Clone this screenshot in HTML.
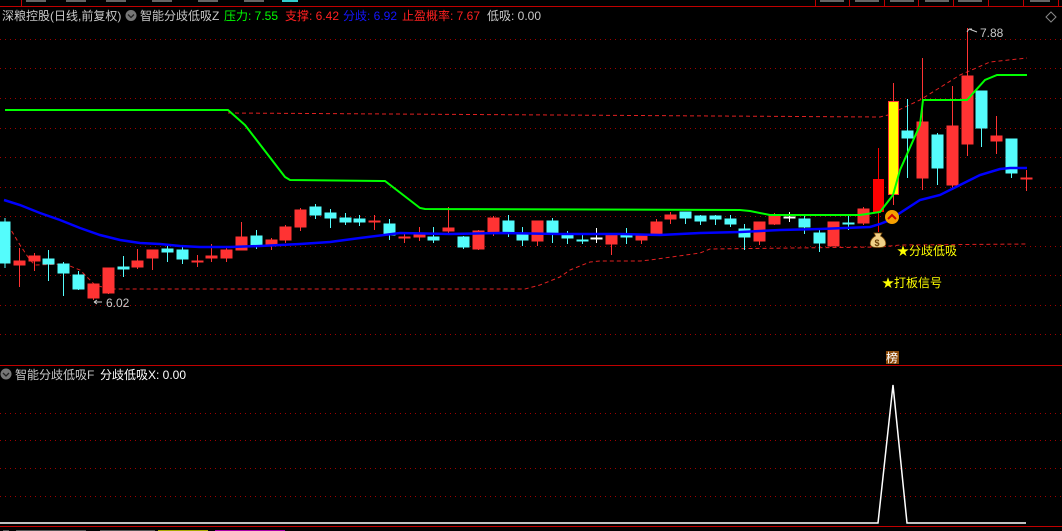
<!DOCTYPE html>
<html><head><meta charset="utf-8"><style>
html,body{margin:0;padding:0;background:#000;width:1062px;height:531px;overflow:hidden}
svg{display:block}
text{font-family:"Liberation Sans","Noto Sans CJK SC",sans-serif;font-size:12px}
</style></head><body>
<svg width="1062" height="531" viewBox="0 0 1062 531" xmlns="http://www.w3.org/2000/svg">
<rect width="1062" height="531" fill="#000"/>
<line x1="0" y1="6.5" x2="1062" y2="6.5" stroke="#c00000" stroke-width="1"/>
<g stroke="#c00000"><line x1="21.5" y1="0" x2="21.5" y2="6"/><line x1="815.5" y1="0" x2="815.5" y2="6"/><line x1="849.5" y1="0" x2="849.5" y2="6"/><line x1="884.5" y1="0" x2="884.5" y2="6"/><line x1="918.5" y1="0" x2="918.5" y2="6"/><line x1="953.5" y1="0" x2="953.5" y2="6"/><line x1="988.5" y1="0" x2="988.5" y2="6"/><line x1="1023.5" y1="0" x2="1023.5" y2="6"/><line x1="1058.5" y1="0" x2="1058.5" y2="6"/></g>
<g fill="#666"><rect x="26" y="0" width="20" height="2"/><rect x="66" y="0" width="20" height="2"/><rect x="106" y="0" width="20" height="2"/><rect x="152" y="0" width="20" height="2"/><rect x="198" y="0" width="20" height="2"/><rect x="244" y="0" width="20" height="2"/><rect x="282" y="0" width="16" height="2" fill="#3cc"/><rect x="820" y="0" width="24" height="2"/><rect x="855" y="0" width="24" height="2"/><rect x="890" y="0" width="24" height="2"/><rect x="925" y="0" width="24" height="2"/><rect x="958" y="0" width="24" height="2"/><rect x="1030" y="0" width="20" height="2"/></g>
<g stroke="#a00000" stroke-width="1" stroke-dasharray="1 4">
<line x1="0" y1="39.5" x2="1062" y2="39.5"/><line x1="0" y1="68.5" x2="1062" y2="68.5"/><line x1="0" y1="98.5" x2="1062" y2="98.5"/><line x1="0" y1="128.5" x2="1062" y2="128.5"/><line x1="0" y1="157.5" x2="1062" y2="157.5"/><line x1="0" y1="187.5" x2="1062" y2="187.5"/><line x1="0" y1="216.5" x2="1062" y2="216.5"/><line x1="0" y1="246.5" x2="1062" y2="246.5"/><line x1="0" y1="275.5" x2="1062" y2="275.5"/><line x1="0" y1="305.5" x2="1062" y2="305.5"/><line x1="0" y1="334.5" x2="1062" y2="334.5"/>
<line x1="0" y1="413.5" x2="1062" y2="413.5"/><line x1="0" y1="440.5" x2="1062" y2="440.5"/><line x1="0" y1="468.5" x2="1062" y2="468.5"/><line x1="0" y1="496.5" x2="1062" y2="496.5"/>
</g>
<line x1="0" y1="365.5" x2="1062" y2="365.5" stroke="#c00000"/>
<line x1="0" y1="526.5" x2="1062" y2="526.5" stroke="#c00000"/>
<text x="2" y="20" fill="#c8c8c8">深粮控股(日线,前复权)</text>
<circle cx="131" cy="15.5" r="5.5" fill="#777"/><path d="M128 14.5l3 3 3-3" stroke="#222" stroke-width="1.3" fill="none"/>
<text x="140" y="20" fill="#c8c8c8">智能分歧低吸Z</text>
<text x="224" y="20" fill="#00ff00">压力: 7.55</text>
<text x="285" y="20" fill="#ff2020">支撑: 6.42</text>
<text x="343" y="20" fill="#1515ff">分歧: 6.92</text>
<text x="402" y="20" fill="#ff2020">止盈概率: 7.67</text>
<text x="487" y="20" fill="#c8c8c8">低吸: 0.00</text>
<circle cx="6" cy="374" r="5.5" fill="#777"/><path d="M3 373l3 3 3-3" stroke="#222" stroke-width="1.3" fill="none"/>
<text x="15" y="379" fill="#c8c8c8">智能分歧低吸F</text>
<text x="100" y="379" fill="#fff">分歧低吸X: 0.00</text>
<path d="M1051 12l5 5-5 5-5-5z" stroke="#888" fill="none"/>
<g stroke="#e02020" stroke-width="1" stroke-dasharray="4 3" fill="none">
<polyline points="228,113 880,117 888,115 920,100 960,75 990,62 1027,58"/>
<polyline points="8,225 20,245 30,260 35,265 65,264 80,270 95,285 110,289 525,289 540,285 560,277 570,270 590,262 600,261 640,261 650,260 700,253 710,249 880,247 900,245 1027,244"/>
</g>
<g stroke-width="1" shape-rendering="crispEdges">
<g stroke="#54fcfc" fill="#54fcfc">
<line x1="5" y1="218" x2="5" y2="268"/><rect x="0" y="222" width="10" height="41"/>
<line x1="48.5" y1="250" x2="48.5" y2="281"/><rect x="43" y="259" width="11" height="5"/>
<line x1="63.5" y1="262" x2="63.5" y2="296"/><rect x="58" y="264" width="11" height="9"/>
<line x1="78.5" y1="271" x2="78.5" y2="290"/><rect x="73" y="275" width="11" height="14"/>
<line x1="123.5" y1="256" x2="123.5" y2="277"/><rect x="118" y="267" width="11" height="2"/>
<line x1="167.5" y1="245" x2="167.5" y2="262"/><rect x="162" y="249" width="11" height="3"/>
<line x1="182.5" y1="247" x2="182.5" y2="264"/><rect x="177" y="250" width="11" height="9"/>
<line x1="256.5" y1="230" x2="256.5" y2="249"/><rect x="251" y="236" width="11" height="9"/>
<line x1="315.5" y1="204" x2="315.5" y2="219"/><rect x="310" y="207" width="11" height="8"/>
<line x1="330.5" y1="209" x2="330.5" y2="228"/><rect x="325" y="213" width="11" height="5"/>
<line x1="345.5" y1="213" x2="345.5" y2="225"/><rect x="340" y="218" width="11" height="4"/>
<line x1="359.5" y1="215" x2="359.5" y2="226"/><rect x="354" y="219" width="11" height="3"/>
<line x1="389.5" y1="219" x2="389.5" y2="240"/><rect x="384" y="224" width="11" height="11"/>
<line x1="433.5" y1="227" x2="433.5" y2="243"/><rect x="428" y="237" width="11" height="3"/>
<line x1="463.5" y1="236" x2="463.5" y2="249"/><rect x="458" y="237" width="11" height="10"/>
<line x1="508.5" y1="215" x2="508.5" y2="237"/><rect x="503" y="221" width="11" height="12"/>
<line x1="522.5" y1="227" x2="522.5" y2="246"/><rect x="517" y="234" width="11" height="6"/>
<line x1="552.5" y1="218" x2="552.5" y2="243"/><rect x="547" y="221" width="11" height="12"/>
<line x1="567.5" y1="231" x2="567.5" y2="244"/><rect x="562" y="234" width="11" height="4"/>
<line x1="582.5" y1="235" x2="582.5" y2="244"/><rect x="577" y="240" width="11" height="1"/>
<line x1="626.5" y1="228" x2="626.5" y2="244"/><rect x="621" y="234" width="11" height="3"/>
<line x1="685.5" y1="212" x2="685.5" y2="224"/><rect x="680" y="212" width="11" height="6"/>
<line x1="700.5" y1="215" x2="700.5" y2="225"/><rect x="695" y="216" width="11" height="5"/>
<line x1="715.5" y1="215" x2="715.5" y2="225"/><rect x="710" y="216" width="11" height="3"/>
<line x1="730.5" y1="215" x2="730.5" y2="227"/><rect x="725" y="219" width="11" height="5"/>
<line x1="744.5" y1="224" x2="744.5" y2="250"/><rect x="739" y="229" width="11" height="8"/>
<line x1="804.5" y1="215" x2="804.5" y2="234"/><rect x="799" y="219" width="11" height="8"/>
<line x1="819.5" y1="229" x2="819.5" y2="252"/><rect x="814" y="233" width="11" height="10"/>
<line x1="848.5" y1="216" x2="848.5" y2="230"/><rect x="843" y="223" width="11" height="1"/>
<line x1="907.5" y1="99" x2="907.5" y2="178"/><rect x="902" y="131" width="11" height="7"/>
<line x1="937.5" y1="133" x2="937.5" y2="185"/><rect x="932" y="135" width="11" height="33"/>
<line x1="981.5" y1="91" x2="981.5" y2="147"/><rect x="976" y="91" width="11" height="37"/>
<line x1="1011.5" y1="139" x2="1011.5" y2="178"/><rect x="1006" y="139" width="11" height="34"/>
</g>
<g stroke="#ff3333" fill="#ff3333">
<line x1="19.5" y1="248" x2="19.5" y2="287"/><rect x="14" y="261" width="11" height="4"/>
<line x1="34.5" y1="253" x2="34.5" y2="271"/><rect x="29" y="256" width="11" height="5"/>
<line x1="93.5" y1="284" x2="93.5" y2="300"/><rect x="88" y="284" width="11" height="14"/>
<line x1="108.5" y1="268" x2="108.5" y2="294"/><rect x="103" y="268" width="11" height="25"/>
<line x1="137.5" y1="249" x2="137.5" y2="269"/><rect x="132" y="261" width="11" height="6"/>
<line x1="152.5" y1="250" x2="152.5" y2="270"/><rect x="147" y="250" width="11" height="8"/>
<line x1="197.5" y1="255" x2="197.5" y2="267"/><rect x="192" y="261" width="11" height="1"/>
<line x1="211.5" y1="244" x2="211.5" y2="262"/><rect x="206" y="256" width="11" height="2"/>
<line x1="226.5" y1="248" x2="226.5" y2="262"/><rect x="221" y="250" width="11" height="8"/>
<line x1="241.5" y1="222" x2="241.5" y2="250"/><rect x="236" y="237" width="11" height="13"/>
<line x1="271.5" y1="238" x2="271.5" y2="250"/><rect x="266" y="240" width="11" height="4"/>
<line x1="285.5" y1="225" x2="285.5" y2="243"/><rect x="280" y="227" width="11" height="13"/>
<line x1="300.5" y1="208" x2="300.5" y2="231"/><rect x="295" y="210" width="11" height="17"/>
<line x1="374.5" y1="215" x2="374.5" y2="230"/><rect x="369" y="221" width="11" height="1"/>
<line x1="404.5" y1="234" x2="404.5" y2="243"/><rect x="399" y="237" width="11" height="1"/>
<line x1="419.5" y1="227" x2="419.5" y2="241"/><rect x="414" y="234" width="11" height="3"/>
<line x1="448.5" y1="207" x2="448.5" y2="233"/><rect x="443" y="228" width="11" height="3"/>
<line x1="478.5" y1="230" x2="478.5" y2="250"/><rect x="473" y="231" width="11" height="18"/>
<line x1="493.5" y1="216" x2="493.5" y2="236"/><rect x="488" y="218" width="11" height="15"/>
<line x1="537.5" y1="221" x2="537.5" y2="246"/><rect x="532" y="221" width="11" height="20"/>
<line x1="611.5" y1="234" x2="611.5" y2="255"/><rect x="606" y="234" width="11" height="10"/>
<line x1="641.5" y1="236" x2="641.5" y2="244"/><rect x="636" y="236" width="11" height="4"/>
<line x1="656.5" y1="219" x2="656.5" y2="236"/><rect x="651" y="222" width="11" height="13"/>
<line x1="670.5" y1="212" x2="670.5" y2="224"/><rect x="665" y="215" width="11" height="4"/>
<line x1="759.5" y1="222" x2="759.5" y2="245"/><rect x="754" y="222" width="11" height="19"/>
<line x1="774.5" y1="213" x2="774.5" y2="225"/><rect x="769" y="215" width="11" height="9"/>
<line x1="833.5" y1="222" x2="833.5" y2="246"/><rect x="828" y="222" width="11" height="24"/>
<line x1="863.5" y1="207" x2="863.5" y2="225"/><rect x="858" y="209" width="11" height="14"/>
<line x1="922.5" y1="58" x2="922.5" y2="190"/><rect x="917" y="122" width="11" height="56"/>
<line x1="952.5" y1="86" x2="952.5" y2="190"/><rect x="947" y="126" width="11" height="59"/>
<line x1="967.5" y1="28" x2="967.5" y2="156"/><rect x="962" y="76" width="11" height="68"/>
<line x1="996.5" y1="116" x2="996.5" y2="154"/><rect x="991" y="136" width="11" height="5"/>
<line x1="1026.5" y1="170" x2="1026.5" y2="191"/><rect x="1021" y="178" width="11" height="1"/>
</g>
<g stroke="#fff" fill="#fff">
<line x1="596.5" y1="228" x2="596.5" y2="243"/><rect x="591" y="238" width="11" height="1"/>
<line x1="789.5" y1="212" x2="789.5" y2="222"/><rect x="784" y="217" width="11" height="1"/>
</g>
<line x1="878.5" y1="148" x2="878.5" y2="232" stroke="#ff0000"/><rect x="873" y="179" width="11" height="33" fill="#ff0000"/>
<line x1="893.5" y1="83" x2="893.5" y2="205" stroke="#ff3333"/><rect x="888.5" y="101.5" width="10" height="93" fill="#ffff00" stroke="#ff3333"/>
</g>
<polyline points="5,110 228,110 245,125 285,177 290,180 385,181 420,208 425,209 740,210 750,211 770,215 860,215 880,212 893,195 900,170 920,125 923,100 967,100 985,80 997,75 1027,75" stroke="#00ff00" stroke-width="2" fill="none"/>
<polyline points="4,200 20,205 40,213 60,220 80,228 100,235 120,240 140,243 160,244 180,246 200,247 230,247 260,246 300,244 330,242 360,238 400,233 450,234 500,233 560,234 620,234 660,235 700,233 740,232 780,230 820,229 870,227 880,224 890,220 900,213 920,200 940,195 960,185 980,175 1000,169 1010,168 1027,168" stroke="#0000ff" stroke-width="2.5" fill="none"/>
<path d="M969 29l-2 3m2-3h3m-3 0l8 3" stroke="#ccc" fill="none"/>
<text x="980" y="37" fill="#c8c8c8">7.88</text>
<path d="M102 302h-8m0 0l3-2m-3 2l3 2" stroke="#ccc" fill="none"/>
<text x="106" y="307" fill="#c8c8c8">6.02</text>
<circle cx="892" cy="217" r="7" fill="#f5a000"/><path d="M888 219l4-4 4 4" stroke="#c00" stroke-width="2" fill="none"/>
<path d="M874 233h8l-1.5 3c4 2 6 6 5 9-1 2-3 2.5-7.5 2.5s-6.5-.5-7.5-2.5c-1-3 1-7 5-9z" fill="#f0d088" stroke="#7a4a08" stroke-width="0.8"/>
<text x="874.5" y="246" fill="#6a4008" style="font-size:9px;font-weight:bold">$</text>
<text x="897" y="255" fill="#ffff00">★分歧低吸</text>
<text x="882" y="287" fill="#ffff00">★打板信号</text>
<rect x="886" y="351" width="13" height="13" fill="#8b4a0a"/>
<text x="886" y="362" fill="#fff" style="font-size:12px">榜</text>
<polyline points="0,523 878,523 893,385 907,523 1026,523" stroke="#fff" stroke-width="1.5" fill="none"/>
<g fill="#555"><rect x="3" y="530" width="6" height="1"/><rect x="16" y="530" width="70" height="1"/><rect x="100" y="530" width="55" height="1"/></g>
<g fill="#aa0"><rect x="158" y="530" width="50" height="1"/></g>
<g fill="#a0a"><rect x="215" y="530" width="70" height="1"/></g>
</svg>
</body></html>
